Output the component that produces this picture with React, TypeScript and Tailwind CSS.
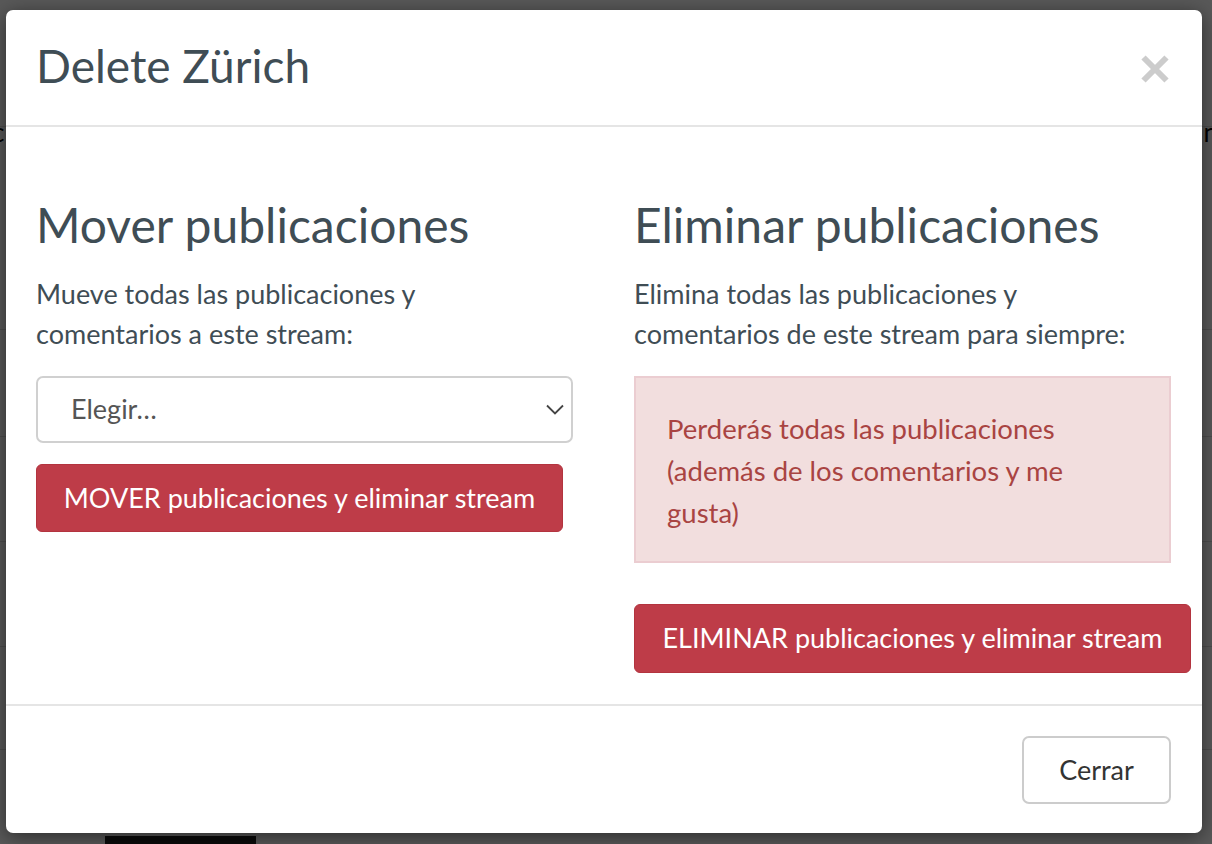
import React from "react";

const font = { fontFamily: '"Lato", "Noto Sans", sans-serif' };

function CloseIcon() {
  return (
    <svg width="28" height="28" viewBox="0 0 28 28" aria-hidden="true">
      <path d="M2.5 2.5 L25.5 25.5 M25.5 2.5 L2.5 25.5" stroke="#cccccc" strokeWidth="6" fill="none" />
    </svg>
  );
}

function Chevron() {
  return (
    <svg width="18" height="11" viewBox="0 0 18 11" aria-hidden="true">
      <path d="M1 1.5 L9 9.5 L17 1.5" stroke="#444" strokeWidth="1.8" fill="none" />
    </svg>
  );
}

function BackgroundPage() {
  // the page behind the modal, only its edges show through
  return (
    <div className="flex flex-col bg-white min-h-[844px]">
      <div className="h-[127px] border-b border-[#dcdcdc]" />
      <div className="h-[213px] border-b border-[#dcdcdc] flex items-start justify-between -mt-[10px] text-[26px] text-black leading-[30px]">
        <span className="-ml-[8px]">c</span>
        <span className="-mr-[6px]">n</span>
      </div>
      <div className="h-[107px] border-b border-[#dcdcdc]" />
      <div className="h-[105px] border-b border-[#dcdcdc]" />
      <div className="h-[105px] border-b border-[#dcdcdc]" />
      <div className="h-[103px] border-b border-[#dcdcdc]" />
      <div className="flex-1 flex items-end pl-[105px]">
        <div className="w-[151px] h-[8px] bg-[#222]" />
      </div>
    </div>
  );
}

export default function App() {
  return (
    <div className="relative w-[1212px] h-[844px] overflow-hidden" style={font}>
      <BackgroundPage />
      <div className="absolute inset-0 bg-black/65 pt-[10px] pl-[6px] pr-[10px]">
        <div className="bg-white rounded-[7px] shadow-[0_4px_20px_rgba(0,0,0,0.5)] text-[#3f4d55] h-[823px] flex flex-col">
          {/* header */}
          <div className="h-[117px] shrink-0 border-b-2 border-[#e5e5e5] pl-[30px] pr-[33px] flex items-center justify-between">
            <h2 className="text-[46px] leading-none pb-1">Delete Zürich</h2>
            <button className="mt-[2px]">
              <CloseIcon />
            </button>
          </div>

          {/* body */}
          <div className="flex-1 pl-[30px] pr-[31px] pt-[73px] pb-[31px] grid grid-cols-[537px_537px] gap-x-[61px]">
            <div className="flex flex-col items-start">
              <h3 className="text-[48px] leading-[50px]">Mover publicaciones</h3>
              <p className="mt-[24px] text-[27px] leading-[40px] w-full">
                Mueve todas las publicaciones y<br />comentarios a este stream:
              </p>
              <div className="mt-[22px] w-full h-[67px] border-2 border-[#d0d0d0] rounded-[7px] flex items-center justify-between pl-[33px] pr-[7px] text-[27px] text-[#555]">
                <span>Elegir…</span>
                <Chevron />
              </div>
              <button className="mt-[21px] w-[527px] h-[68px] bg-[#be3c48] border border-[#b3343f] rounded-[6px] text-white text-[27px] whitespace-nowrap">
                MOVER publicaciones y eliminar stream
              </button>
            </div>

            <div className="flex flex-col items-start">
              <h3 className="text-[48px] leading-[50px]">Eliminar publicaciones</h3>
              <p className="mt-[24px] text-[27px] leading-[40px] w-full">
                Elimina todas las publicaciones y<br />comentarios de este stream para siempre:
              </p>
              <div className="mt-[22px] w-full h-[187px] bg-[#f2dede] border-2 border-[#ebcdd1] px-[31px] pt-[30px] text-[27.5px] leading-[42px] text-[#a94442]">
                Perderás todas las publicaciones (además de los comentarios y me gusta)
              </div>
              <button className="mt-[41px] w-[557px] h-[69px] shrink-0 bg-[#be3c48] border border-[#b3343f] rounded-[6px] text-white text-[27px] whitespace-nowrap">
                ELIMINAR publicaciones y eliminar stream
              </button>
            </div>
          </div>

          {/* footer */}
          <div className="h-[130px] shrink-0 border-t-2 border-[#e5e5e5] pr-[31px] flex items-center justify-end">
            <button className="w-[149px] h-[68px] border-2 border-[#cccccc] rounded-[7px] text-[27px] text-[#333]">
              Cerrar
            </button>
          </div>
        </div>
      </div>
    </div>
  );
}
